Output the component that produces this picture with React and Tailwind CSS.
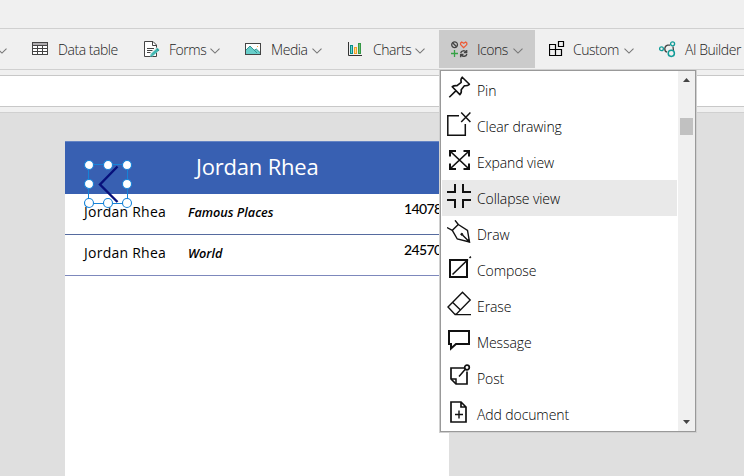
import React from "react";

const uiFont = "font-['Open_Sans','Noto_Sans',sans-serif]";

function Svg({ w, h, children, className = "", sw = 1.5 }) {
  return (
    <svg width={w} height={h} viewBox={`0 0 ${w} ${h}`} fill="none" stroke="#111" strokeWidth={sw} className={`block shrink-0 ${className}`}>
      {children}
    </svg>
  );
}

function Chevron() {
  return (
    <Svg w={10} h={6} className="relative top-[2px]" sw={1.1}>
      <path d="M.5 .7L5 5.1L9.5 .7" stroke="#777" />
    </Svg>
  );
}

const TableIcon = () => (
  <Svg w={16} h={14} sw={1}>
    <rect x=".5" y=".5" width="15" height="12" fill="#fff" stroke="#444" />
    <path d="M1 2h14" stroke="#b0adb0" strokeWidth="2" />
    <path d="M1 3.5h14M1 6.5h14M1 9.5h14M5.5 4v9M10.5 4v9" stroke="#444" />
  </Svg>
);

const FormIcon = () => (
  <Svg w={16} h={17} sw={1}>
    <path d="M.5 .5H9L12.5 4V15.5H.5Z" fill="#fff" stroke="#444" />
    <path d="M8.5 .5V4.5H12.5M3 7.5h7M3 9.5h6M3 11.5h4" stroke="#444" />
    <path d="M13.5 7.5L7 14" stroke="#f0f0f0" strokeWidth="4.5" />
    <path d="M14.5 7.8L7.8 14" stroke="#43b9b3" strokeWidth="3" />
    <path d="M6 16l.7-3 2.3 2z" fill="#43b9b3" stroke="none" />
    <path d="M12.7 7.8l2 2" stroke="#238c88" />
  </Svg>
);

const MediaIcon = () => (
  <Svg w={16} h={12} sw={1}>
    <rect x=".5" y=".5" width="15" height="11" fill="#fff" stroke="#444" />
    <path d="M1 7L5 3L9.2 7.3L11.3 6L15 9.5V11H1Z" fill="#68ceca" stroke="none" />
    <path d="M1 7L5 3L12 10M9 7.5L11.3 6L15 9.5" stroke="#29918e" strokeWidth=".9" />
    <rect x="12" y="3" width="1" height="1" fill="#f5a33b" stroke="none" />
  </Svg>
);

const ChartIcon = () => (
  <Svg w={15} h={14} sw={1}>
    <path d="M.5 0V13.5H14" stroke="#333" />
    <rect x="2.5" y="3.5" width="2" height="8" fill="#6fd3cd" stroke="#078c88" />
    <rect x="6.5" y="5.5" width="2" height="6" fill="#ffd79b" stroke="#f2a128" />
    <rect x="10.5" y="1.5" width="2" height="10" fill="#6abf70" stroke="#359846" />
  </Svg>
);

const IconsIcon = () => (
  <Svg w={17} h={17} sw={1.3}>
    <circle cx="3.6" cy="3.7" r="2.9" stroke="#444" />
    <path d="M1.6 1.7l4 4" stroke="#444" />
    <path d="M12.7 6.7L9.6 3.6V2L10.7 1L12.7 2.2L14.7 1L15.8 2V3.6Z" stroke="#ed5b36" strokeWidth="1.3" />
    <path d="M3.5 9v7M0 12.5h7" stroke="#35a245" />
    <path d="M9.7 12C10.3 9.4 13.7 9 15.3 11M15.7 9v2.7h-2.8M15.9 13C15.3 15.7 11.8 16 10.2 14M9.6 16.3v-2.8h2.9" stroke="#444" />
  </Svg>
);

const CustomIcon = () => (
  <Svg w={16} h={16} sw={1.2}>
    <path d="M.5 3.5h6v11h-6ZM.5 8.5h12v6H.5M9.5 .5h5v5h-5z" stroke="#000" />
  </Svg>
);

const AiIcon = () => (
  <Svg w={17} h={17} sw={1.3}>
    <path d="M11 4.2H8.7A3.7 3.7 0 0 0 8 11.2M14 5.5L14.5 10" stroke="#444" />
    <circle cx="2.5" cy="7.7" r="1.9" stroke="#119c98" />
    <circle cx="13.6" cy="2.8" r="2" stroke="#119c98" />
    <circle cx="12.3" cy="12.3" r="3.1" stroke="#119c98" strokeWidth="1.5" />
  </Svg>
);

function Tool({ icon, label, width, labelWidth, chevron = true, iconWidth = "w-[25px]", className = "h-full" }) {
  return (
    <div className={`flex shrink-0 items-center ${width} ${className}`}>
      <span className={`${iconWidth} shrink-0`}>{icon}</span>
      <span className={`${labelWidth} shrink-0 whitespace-nowrap`}>{label}</span>
      {chevron && <Chevron />}
    </div>
  );
}

const icons = {
  pin: <Svg w={26} h={26} sw={1.6}><path d="M2.3 22.2L9.3 15.4M5.2 11.7C7 10.4 8.6 10.6 10 10.7L14.2 7.3C13.6 5.3 13.8 3.7 15.2 2.2L22.4 9.3C20.8 10.7 19.2 11 17.4 10.7L14.2 14.7C14.6 16.7 14.3 18.4 12.9 19.6Z" strokeLinejoin="round" /></Svg>,
  clear: <Svg w={26} h={26}><path d="M12 4.7H.8V24.3H18.3V13" /><path d="M14.2 1.5L23.4 11M23.4 1.5L14.2 11" /></Svg>,
  expand: <Svg w={26} h={26}><path d="M3 9.5V4H9M16.5 4H22V9.5M22 16.5V22H16.5M9 22H3V16.5" strokeWidth="2" /><path d="M4 5L21 21M21 5L4 21" strokeWidth="1.7" /></Svg>,
  collapse: <Svg w={26} h={26} sw={2}><path d="M0 9H8V1M16 1V9H24M0 17H8V25M16 25V17H24" /></Svg>,
  draw: <Svg w={26} h={26} sw={1.4} className="translate-y-px"><path d="M0 7.5L5.3 10.3L11.3 4.5L8 .3M5.3 10.3L10.3 19L22.5 22L20.5 10.5L11.3 4.5M22.5 22L15.5 15" /><circle cx="14.8" cy="14.3" r="1" fill="#111" strokeWidth="1" /><path d="M23 22.5L19 21.5L22 18.5Z" fill="#111" stroke="none" /></Svg>,
  compose: <Svg w={26} h={26}><path d="M20 5H3V22H20V5Z" strokeWidth="2" /><path d="M5.5 19.5L21 4.5" strokeWidth="1.6" /><path d="M22.5 3L23.9 1.6" /></Svg>,
  erase: <Svg w={26} h={26} sw={1.4}><path d="M1 16L15.5 1.3L23.2 9L9.5 23L8 23.5L1 16ZM5.5 11.3L13.5 19M8 23.6H24" /></Svg>,
  message: <Svg w={26} h={26} sw={2}><path d="M2 4H22V17H9L4 21.5V17H2Z" /></Svg>,
  post: <Svg w={26} h={26}><path d="M17 5H4V16L9 21H20V8.5" strokeWidth="1.7" /><path d="M4 16H9V21M12 13.5L18.5 6" strokeWidth="1.5" /><circle cx="20" cy="4.5" r="2.3" strokeWidth="1.7" /></Svg>,
  document: <Svg w={26} h={26} sw={1.7} className="translate-y-px"><path d="M4 2H14L19 7V22H4ZM14 2V7H19" /><path d="M8 14.5H16M12 10.5V18.5" strokeWidth="1.4" /></Svg>,
};

const menu = [
  ["Pin", icons.pin, ""],
  ["Clear drawing", icons.clear, ""],
  ["Expand view", icons.expand, ""],
  ["Collapse view", icons.collapse, "bg-[#e9e9e9]"],
  ["Draw", icons.draw, ""],
  ["Compose", icons.compose, ""],
  ["Erase", icons.erase, ""],
  ["Message", icons.message, ""],
  ["Post", icons.post, ""],
  ["Add document", icons.document, ""],
];

function IconMenu() {
  return (
    <div className="absolute left-[440px] top-[70px] flex h-[362px] w-[256px] border border-[#999] bg-white pt-px pl-px shadow-[0_0_0_1px_#d0d0d0]">
      <div className="mr-px w-[235px] shrink-0 text-[14px] font-light tracking-[-0.1px] text-black">
        {menu.map(([label, icon, bg]) => (
          <div key={label} className={`flex h-9 items-center pl-[5px] ${bg}`}>
            <span className="flex w-[30px] shrink-0 -translate-y-[2px]">{icon}</span>
            <span className="whitespace-nowrap">{label}</span>
          </div>
        ))}
      </div>
      <div className="-mt-px flex w-[17px] flex-col items-center bg-[#f0f0f0]">
        <Svg w={7} h={4} className="mt-[7px]"><path d="M0 4L3.5 0L7 4Z" fill="#444" stroke="none" /></Svg>
        <div className="mt-[36px] h-[17px] w-[13px] bg-[#c1c1c1]" />
        <Svg w={7} h={4} className="mb-[7px] mt-auto"><path d="M0 0H7L3.5 4Z" fill="#444" stroke="none" /></Svg>
      </div>
    </div>
  );
}

function Selection() {
  const points = [[7, 7], [26, 7], [45, 7], [7, 26], [45, 26], [7, 45], [26, 45], [45, 45]];
  return (
    <Svg w={52} h={52} className="absolute left-[17px] top-[17px]">
      <rect x="6.5" y="6.5" width="39" height="39" stroke="#1683d8" strokeWidth="1" />
      <path d="M35.5 8.5L18 26.5L35.5 44" stroke="#07107b" strokeWidth="2.4" />
      {points.map(([x, y]) => (
        <circle key={`${x}-${y}`} cx={x} cy={y} r="4.5" fill="#fff" stroke="#1683d8" strokeWidth="1.1" />
      ))}
    </Svg>
  );
}

function Row({ category, value, border }) {
  return (
    <div className={`flex h-[41px] overflow-hidden border-b pl-[19px] text-black ${border}`}>
      <span className="w-[104px] shrink-0 pt-[8px] text-[14px] leading-5 tracking-[0.25px]">Jordan Rhea</span>
      <span className="w-[216px] shrink-0 pt-[8px] text-[12.7px] font-semibold italic leading-5">{category}</span>
      <span className="pt-[5px] font-['Lato',sans-serif] text-[14px] font-medium leading-5 tracking-[-0.6px]">{value}</span>
    </div>
  );
}

export default function App() {
  return (
    <div className={`relative flex h-[476px] w-[744px] flex-col overflow-hidden bg-[#f0f0f0] ${uiFont}`}>
      <header className="h-[29px] shrink-0 border-b border-[#d0d0d0]" />
      <nav className="flex h-[41px] shrink-0 items-center overflow-hidden border-b border-[#d0d0d0] text-[14px] font-light tracking-[-0.45px] text-[#222]">
        <div className="-ml-[3px] w-[35px] shrink-0"><Chevron /></div>
        <Tool icon={<TableIcon />} label="Data table" width="w-[112px]" iconWidth="w-[26px]" labelWidth="w-[65px]" chevron={false} />
        <Tool icon={<FormIcon />} label="Forms" width="w-[101px]" labelWidth="w-[41px]" />
        <Tool icon={<MediaIcon />} label="Media" width="w-[103px]" iconWidth="w-[26px]" labelWidth="w-[41px]" />
        <Tool icon={<ChartIcon />} label="Charts" width="w-[91px]" labelWidth="w-[42px]" />
        <Tool icon={<IconsIcon />} label="Icons" width="w-[96px]" iconWidth="w-[26px]" labelWidth="w-[36px]" className="h-[38px] bg-[#cbcbcb] pl-[12px]" />
        <Tool icon={<CustomIcon />} label="Custom" width="w-[110px]" labelWidth="w-[51px]" className="ml-[14px] h-full" iconWidth="w-[24px]" />
        <Tool icon={<AiIcon />} label="AI Builder" width="w-[90px]" iconWidth="w-[26px]" labelWidth="w-[65px]" chevron={false} />
      </nav>
      <div className="mt-[5px] h-8 shrink-0 border-y border-[#c8c8c8] bg-white" />
      <main className="mt-[5px] flex-1 border-t border-[#d0d0d0] bg-[#dfdfdf] pl-[65px] pt-[28px]">
        <section className="relative h-full w-[384px] bg-white">
          <div className="h-[53px] border-t border-[#6484c4] bg-[#3860b2] pl-[131px] pt-[8px] text-[22px] leading-[32px] tracking-[-0.2px] text-white">Jordan Rhea</div>
          <Row category="Famous Places" value="14078" border="border-[#566b9f]" />
          <Row category="World" value="24570" border="border-[#7d88bc]" />
          <Selection />
        </section>
      </main>
      <IconMenu />
    </div>
  );
}
